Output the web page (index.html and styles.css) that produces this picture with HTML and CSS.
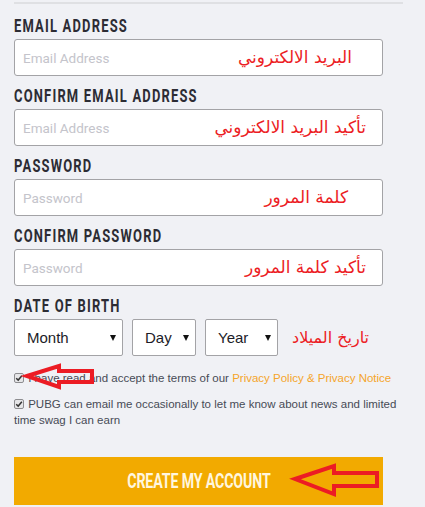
FILE: index.html
```html
<!DOCTYPE html>
<html lang="en">
<head>
<meta charset="utf-8">
<title>Create account</title>
<link rel="stylesheet" href="styles.css">
</head>
<body>
<div class="page">
  <div class="topline"></div>
  <form class="form">
    <div class="group">
      <label class="label"><span>EMAIL ADDRESS</span></label>
      <div class="field">
        <input class="input" type="text" placeholder="Email Address">
        <span class="note note-1" dir="rtl">البريد الالكتروني</span>
      </div>
    </div>
    <div class="group">
      <label class="label"><span>CONFIRM EMAIL ADDRESS</span></label>
      <div class="field">
        <input class="input" type="text" placeholder="Email Address">
        <span class="note note-2" dir="rtl">تأكيد البريد الالكتروني</span>
      </div>
    </div>
    <div class="group">
      <label class="label"><span>PASSWORD</span></label>
      <div class="field">
        <input class="input" type="text" placeholder="Password">
        <span class="note note-3" dir="rtl">كلمة المرور</span>
      </div>
    </div>
    <div class="group">
      <label class="label"><span>CONFIRM PASSWORD</span></label>
      <div class="field">
        <input class="input" type="text" placeholder="Password">
        <span class="note note-4" dir="rtl">تأكيد كلمة المرور</span>
      </div>
    </div>
    <div class="group">
      <label class="label"><span>DATE OF BIRTH</span></label>
      <div class="dob">
        <div class="select sel-month"><span>Month</span><i class="caret"></i></div>
        <div class="select sel-day"><span>Day</span><i class="caret"></i></div>
        <div class="select sel-year"><span>Year</span><i class="caret"></i></div>
        <span class="dob-note" dir="rtl">تاريخ الميلاد</span>
      </div>
    </div>

    <p class="check check-1"><span class="cb"><svg viewBox="0 0 10 10" width="8" height="8"><path d="M1.5 5.2 L4 7.6 L8.6 2.2" fill="none" stroke="#333" stroke-width="1.8"/></svg></span> I have read and accept the terms of our <a class="link" href="#">Privacy Policy &amp; Privacy Notice</a></p>
    <p class="check check-2"><span class="cb"><svg viewBox="0 0 10 10" width="8" height="8"><path d="M1.5 5.2 L4 7.6 L8.6 2.2" fill="none" stroke="#333" stroke-width="1.8"/></svg></span> PUBG can email me occasionally to let me know about news and limited time swag I can earn</p>

    <button class="submit" type="button"><span>CREATE MY ACCOUNT</span></button>
  </form>

  <svg class="arrows" viewBox="0 0 425 507" width="425" height="507">
    <polygon points="27,376 59,366 59,371 92,371 92,382 59,382 59,387" fill="none" stroke="#ec1c24" stroke-width="4" stroke-linejoin="miter"/>
    <polygon points="295,479 334,466 334,473 377,473 377,486 334,486 334,494" fill="none" stroke="#ec1c24" stroke-width="4" stroke-linejoin="miter"/>
  </svg>
</div>
</body>
</html>
```

FILE: styles.css
```css
* { box-sizing: border-box; }

html, body {
  margin: 0;
  padding: 0;
  background: #f0f1f5;
}

.page {
  position: relative;
  width: 425px;
  height: 507px;
  padding-left: 14px;
  overflow: hidden;
  font-family: "Liberation Sans", Arial, sans-serif;
}

.topline {
  width: 389px;
  height: 2px;
  margin-top: 2px;
  background: #dfe0e3;
}

.form {
  width: 389px;
  margin-top: 12px;
}

.group {
  margin-bottom: 10px;
}

.label {
  display: block;
  height: 20px;
  line-height: 20px;
  margin-bottom: 3px;
  font-family: Roboto, "Liberation Sans", sans-serif;
  font-weight: 700;
  font-size: 18.5px;
  color: #2c2c34;
  white-space: nowrap;
}

.label span {
  display: inline-block;
  letter-spacing: 1.7px;
  transform: scaleX(0.7);
  transform-origin: left center;
}

.field {
  position: relative;
  width: 369px;
}

.input {
  display: block;
  width: 369px;
  height: 37px;
  margin: 0;
  padding: 0 8px;
  border: 1px solid #a3a3a6;
  border-radius: 3px;
  background: #fff;
  font-family: Roboto, "Liberation Sans", sans-serif;
  font-size: 13.5px;
  color: #333;
  outline: none;
}

.input::placeholder {
  color: #c4c4cb;
}

.note {
  position: absolute;
  top: 0;
  height: 37px;
  line-height: 37px;
  font-family: "DejaVu Sans", sans-serif;
  font-size: 17px;
  color: #ec1c24;
  white-space: nowrap;
  pointer-events: none;
}

.note-1 { right: 31px; }
.note-2 { right: 17px; }
.note-3 { right: 35px; }
.note-4 { right: 17px; }

.dob {
  display: flex;
  align-items: center;
  gap: 9px;
}

.select {
  display: flex;
  align-items: center;
  justify-content: space-between;
  height: 37px;
  padding: 0 6px 0 12px;
  border: 1px solid #a3a3a6;
  border-radius: 2px;
  background: #fff;
  font-family: "Liberation Sans", Arial, sans-serif;
  font-size: 15px;
  color: #1c1c28;
}

.sel-month { width: 109px; }
.sel-day { width: 64px; }
.sel-year { width: 73px; }

.caret {
  width: 0;
  height: 0;
  border-left: 3px solid transparent;
  border-right: 3px solid transparent;
  border-top: 6px solid #111;
}

.dob-note {
  margin-left: 5px;
  font-family: "DejaVu Sans", sans-serif;
  font-size: 16px;
  color: #ec1c24;
  white-space: nowrap;
}

.check {
  margin: 0;
  font-size: 11.5px;
  line-height: 16px;
  color: #474b55;
}

.check-1 { margin-top: 14px; }
.check-2 { margin-top: 10px; }

.cb {
  display: inline-block;
  width: 10px;
  height: 10px;
  margin-right: 1px;
  border: 1px solid #8d8d90;
  border-radius: 2px;
  background: #e6e6e8;
  vertical-align: -1px;
  line-height: 0;
}

.cb svg {
  display: block;
}

.link {
  color: #f5a52a;
  text-decoration: none;
}

.submit {
  display: flex;
  align-items: center;
  justify-content: center;
  width: 369px;
  height: 48px;
  margin-top: 29px;
  padding: 0;
  border: none;
  border-radius: 0;
  background: #f2aa00;
  font-family: Roboto, "Liberation Sans", sans-serif;
  font-weight: 700;
  font-size: 20px;
  color: #fff6de;
  cursor: pointer;
}

.submit span {
  display: inline-block;
  letter-spacing: -0.2px;
  transform: scaleX(0.71);
}

.arrows {
  position: absolute;
  top: 0;
  left: 0;
  pointer-events: none;
}
```
